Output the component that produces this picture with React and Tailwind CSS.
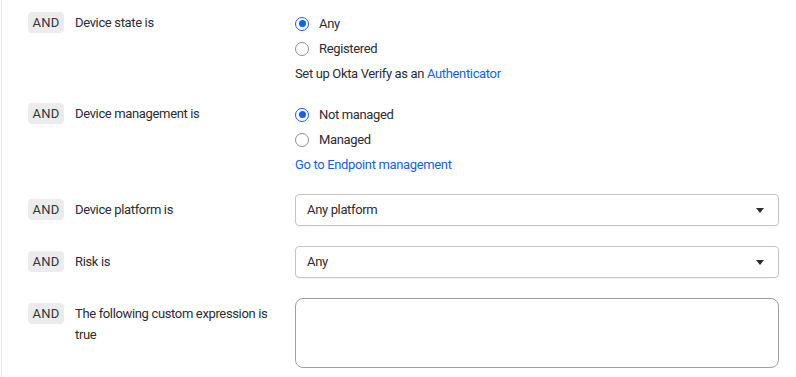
const font = { fontFamily: '"Roboto", "Liberation Sans", sans-serif', letterSpacing: '-0.35px' };

function Badge() {
  return (
    <span className="mt-[5px] flex h-[21px] w-[36px] shrink-0 items-center justify-center rounded-[4px] bg-[#ececee] text-[13px] font-normal tracking-[0.3px] text-[#35353a]">
      AND
    </span>
  );
}

function Label({ children }) {
  return (
    <div className="ml-[11px] w-[210px] shrink-0 pt-[6px] text-[13px] leading-[20.5px] text-[#2c2c31]">
      {children}
    </div>
  );
}

function Radio({ checked, label }) {
  return (
    <label className="flex h-[25px] items-center gap-[10px] text-[13px] text-[#2c2c31]">
      {checked ? (
        <span className="flex h-[14px] w-[14px] items-center justify-center rounded-full border-[1.5px] border-[#1662dd]">
          <span className="h-[7px] w-[7px] rounded-full bg-[#1662dd]" />
        </span>
      ) : (
        <span className="h-[14px] w-[14px] rounded-full border-[1.5px] border-[#8e8e96]" />
      )}
      {label}
    </label>
  );
}

function Select({ value }) {
  return (
    <div className="flex h-[32px] flex-1 items-center justify-between rounded-[4px] border border-[#c4c4ca] pl-[11px] pr-[14px] text-[13px] text-[#2c2c31] shadow-[0_1px_1px_rgba(0,0,0,0.04)]">
      <span>{value}</span>
      <svg width="8" height="5" viewBox="0 0 8 5">
        <path d="M0 0h8L4 5z" fill="#2c2c31" />
      </svg>
    </div>
  );
}

export default function App() {
  return (
    <div className="h-[377px] w-[796px] overflow-hidden bg-white" style={font}>
      <div className="ml-px h-full border-l border-[#ececec] pl-[26px] pr-[17px] pt-[7px]">
        <div className="flex items-start">
          <Badge />
          <Label>Device state is</Label>
          <div className="flex flex-col pt-[4px] pl-[10px]">
            <Radio checked label="Any" />
            <Radio label="Registered" />
            <div className="flex h-[25px] items-center text-[13px] text-[#2c2c31]">
              Set up Okta Verify as an&nbsp;<a className="text-[#1662dd]">Authenticator</a>
            </div>
          </div>
        </div>

        <div className="mt-[12px] flex items-start">
          <Badge />
          <Label>Device management is</Label>
          <div className="flex flex-col pt-[4px] pl-[10px]">
            <Radio checked label="Not managed" />
            <Radio label="Managed" />
            <div className="flex h-[25px] items-center text-[13px]">
              <a className="text-[#1662dd]">Go to Endpoint management</a>
            </div>
          </div>
        </div>

        <div className="mt-[17px] flex items-start">
          <Badge />
          <Label>Device platform is</Label>
          <div className="flex flex-1 pl-[10px]">
            <Select value="Any platform" />
          </div>
        </div>

        <div className="mt-[20px] flex items-start">
          <Badge />
          <Label>Risk is</Label>
          <div className="flex flex-1 pl-[10px]">
            <Select value="Any" />
          </div>
        </div>

        <div className="mt-[20px] flex items-start">
          <Badge />
          <Label>The following custom expression is true</Label>
          <div className="flex flex-1 pl-[10px]">
            <textarea className="h-[70px] flex-1 resize-none rounded-[8px] border border-[#9e9ea6] outline-none" />
          </div>
        </div>
      </div>
    </div>
  );
}
